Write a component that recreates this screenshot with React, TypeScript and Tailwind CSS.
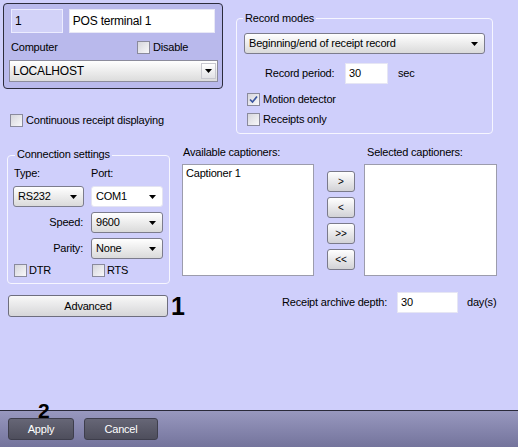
import type { ReactNode } from 'react';

const font = "font-['Liberation_Sans',Arial,sans-serif]";

function Arrow() {
  return (
    <svg width="7" height="4" viewBox="0 0 7 4" className="shrink-0">
      <polygon points="0,0 7,0 3.5,4" fill="#000" />
    </svg>
  );
}

function Checkbox({ checked }: { checked?: boolean }) {
  return (
    <span className="flex h-[13px] w-[13px] shrink-0 items-center justify-center border border-[#8a8a9c] bg-gradient-to-br from-[#d6d6dc] to-[#f8f8fa]">
      {checked ? (
        <svg width="9" height="9" viewBox="0 0 9 9">
          <path d="M1 4.5 L3.5 7 L8 1.5" fill="none" stroke="#3a55a0" strokeWidth="1.7" />
        </svg>
      ) : null}
    </span>
  );
}

function Select({
  value,
  className,
  white,
}: {
  value: string;
  className?: string;
  white?: boolean;
}) {
  return (
    <div
      className={`flex items-center justify-between rounded-[3px] border pl-[4px] pr-[6px] ${
        white
          ? 'border-[#e4e4f2] bg-white'
          : 'border-[#7c7c8c] bg-gradient-to-b from-white to-[#dadada]'
      } ${className ?? ''}`}
    >
      <span>{value}</span>
      <Arrow />
    </div>
  );
}

function Group({
  label,
  className,
  legendClass,
  children,
}: {
  label: string;
  className?: string;
  legendClass?: string;
  children: ReactNode;
}) {
  return (
    <div className={`relative rounded-[4px] border border-[#f6f6ff] ${className ?? ''}`}>
      <span
        className={`absolute bg-[#cfcffb] px-[2px] leading-[12px] ${legendClass ?? ''}`}
      >
        {label}
      </span>
      {children}
    </div>
  );
}

function SmallButton({ label }: { label: string }) {
  return (
    <div className="flex h-[21px] w-[28px] items-center justify-center rounded-[3px] border border-[#7a7a8a] bg-gradient-to-b from-white to-[#d2d2d6] text-[10px] tracking-normal">
      {label}
    </div>
  );
}

function ListBox({ items }: { items: string[] }) {
  return (
    <div className="h-[112px] border border-[#9c9cac] bg-white pl-[3px] pt-[2px]">
      {items.map((it) => (
        <div key={it} className="leading-[12px]">
          {it}
        </div>
      ))}
    </div>
  );
}

export default function App() {
  return (
    <div
      className={`relative flex h-[447px] w-[518px] flex-col overflow-hidden bg-[#cfcffb] text-[11px] tracking-[-0.2px] text-black ${font}`}
    >
      <div className="h-[410px] pl-[3px] pt-[3px]">
        {/* top row */}
        <div className="flex items-start">
          <div className="flex w-[220px] flex-col">
            <div className="h-[86px] w-[220px] rounded-[4px] border border-[#2c2c3c] bg-[#b9b9ec] px-[7px] pt-[5px]">
              <div className="flex gap-[6px]">
                <div className="flex h-[24px] w-[52px] items-center border border-[#ececff] bg-[#d2d2f8] pl-[3px] text-[12px]">
                  1
                </div>
                <div className="flex h-[24px] w-[147px] items-center border border-[#e8e8f6] bg-white pl-[3px] text-[12px]">
                  POS terminal 1
                </div>
              </div>
              <div className="mt-[7px] flex h-[14px] items-center">
                <span className="w-[126px]">Computer</span>
                <Checkbox />
                <span className="ml-[3px]">Disable</span>
              </div>
              <div className="ml-[-2px] mt-[6px] flex h-[22px] w-[209px] items-center justify-between border border-[#8c8c9c] bg-gradient-to-b from-white to-[#dcdcdc] pl-[3px] pr-[1px] text-[12px]">
                <span>LOCALHOST</span>
                <span className="flex h-[16px] w-[15px] items-center justify-center border border-[#c8c8d0] bg-gradient-to-b from-white to-[#e2e2e6]">
                  <Arrow />
                </span>
              </div>
            </div>
            <div className="ml-[7px] mt-[25px] flex h-[13px] items-center gap-[3px]">
              <Checkbox />
              <span>Continuous receipt displaying</span>
            </div>
          </div>

          <Group
            label="Record modes"
            className="ml-[13px] mt-[15px] h-[116px] w-[257px]"
            legendClass="left-[6px] -top-[7px]"
          >
            <Select
              value="Beginning/end of receipt record"
              className="ml-[7px] mt-[14px] h-[21px] w-[241px]"
            />
            <div className="mt-[9px] flex h-[21px] items-center pl-[28px]">
              <span className="w-[80px]">Record period:</span>
              <div className="flex h-[21px] w-[43px] items-center border border-[#e6e6f4] bg-white pl-[3px]">
                30
              </div>
              <span className="ml-[10px]">sec</span>
            </div>
            <div className="mt-[9px] flex h-[13px] items-center gap-[3px] pl-[10px]">
              <Checkbox checked />
              <span>Motion detector</span>
            </div>
            <div className="mt-[7px] flex h-[13px] items-center gap-[3px] pl-[10px]">
              <Checkbox />
              <span>Receipts only</span>
            </div>
          </Group>
        </div>

        {/* middle row */}
        <div className="mt-[11px] flex items-start">
          <Group
            label="Connection settings"
            className="ml-[4px] mt-[10px] h-[129px] w-[163px]"
            legendClass="left-[7px] -top-[8px]"
          >
            <div className="mt-[11px] flex pl-[6px] leading-[12px]">
              <span className="w-[77px]">Type:</span>
              <span>Port:</span>
            </div>
            <div className="mt-[7px] flex gap-[7px] pl-[5px]">
              <Select value="RS232" className="h-[21px] w-[71px]" />
              <Select value="COM1" white className="h-[21px] w-[72px]" />
            </div>
            <div className="mt-[5px] flex items-center">
              <span className="w-[75px] text-right">Speed:</span>
              <Select value="9600" className="ml-[8px] h-[21px] w-[72px]" />
            </div>
            <div className="mt-[5px] flex items-center">
              <span className="w-[75px] text-right">Parity:</span>
              <Select value="None" className="ml-[8px] h-[21px] w-[72px]" />
            </div>
            <div className="mt-[5px] flex h-[13px] items-center pl-[6px]">
              <span className="flex w-[78px] items-center gap-[2px]">
                <Checkbox />
                <span>DTR</span>
              </span>
              <span className="flex items-center gap-[2px]">
                <Checkbox />
                <span>RTS</span>
              </span>
            </div>
          </Group>

          <div className="ml-[12px] flex w-[132px] flex-col">
            <span className="mt-[1px] pl-[1px] leading-[12px]">Available captioners:</span>
            <div className="mt-[6px]">
              <ListBox items={['Captioner 1']} />
            </div>
          </div>

          <div className="ml-[13px] mt-[26px] flex flex-col gap-[5px]">
            <SmallButton label=">" />
            <SmallButton label="<" />
            <SmallButton label=">>" />
            <SmallButton label="<<" />
          </div>

          <div className="ml-[9px] flex w-[133px] flex-col">
            <span className="mt-[1px] pl-[3px] leading-[12px]">Selected captioners:</span>
            <div className="mt-[6px]">
              <ListBox items={[]} />
            </div>
          </div>
        </div>

        {/* advanced row */}
        <div className="mt-[8px] flex items-start">
          <div className="ml-[5px] mt-[3px] flex h-[22px] w-[160px] items-center justify-center rounded-[3px] border border-[#6e6e7e] bg-gradient-to-b from-[#f8f8f8] to-[#d6d6d8]">
            Advanced
          </div>
          <span className="ml-[3px] mt-[2px] w-[14px] text-[25px] font-bold leading-none tracking-normal">
            1
          </span>
          <div className="ml-[97px] flex h-[21px] items-center">
            <span className="w-[115px]">Receipt archive depth:</span>
            <div className="flex h-[21px] w-[61px] items-center border border-[#e6e6f4] bg-white pl-[3px]">
              30
            </div>
            <span className="ml-[9px]">day(s)</span>
          </div>
        </div>
      </div>

      <div className="flex h-[37px] gap-[10px] border-t border-[#2a2a3a] bg-gradient-to-b from-[#9898bf] to-[#74749c] pl-[8px] pt-[7px]">
        <div className="flex h-[22px] w-[66px] items-center justify-center rounded-[3px] border border-[#3e3e4c] bg-gradient-to-b from-[#666676] to-[#4e4e5c] text-white">
          Apply
        </div>
        <div className="flex h-[22px] w-[74px] items-center justify-center rounded-[3px] border border-[#3e3e4c] bg-gradient-to-b from-[#666676] to-[#4e4e5c] text-white">
          Cancel
        </div>
      </div>

      <span className="absolute left-[38px] top-[400px] text-[21px] font-bold leading-none tracking-normal">
        2
      </span>
    </div>
  );
}
